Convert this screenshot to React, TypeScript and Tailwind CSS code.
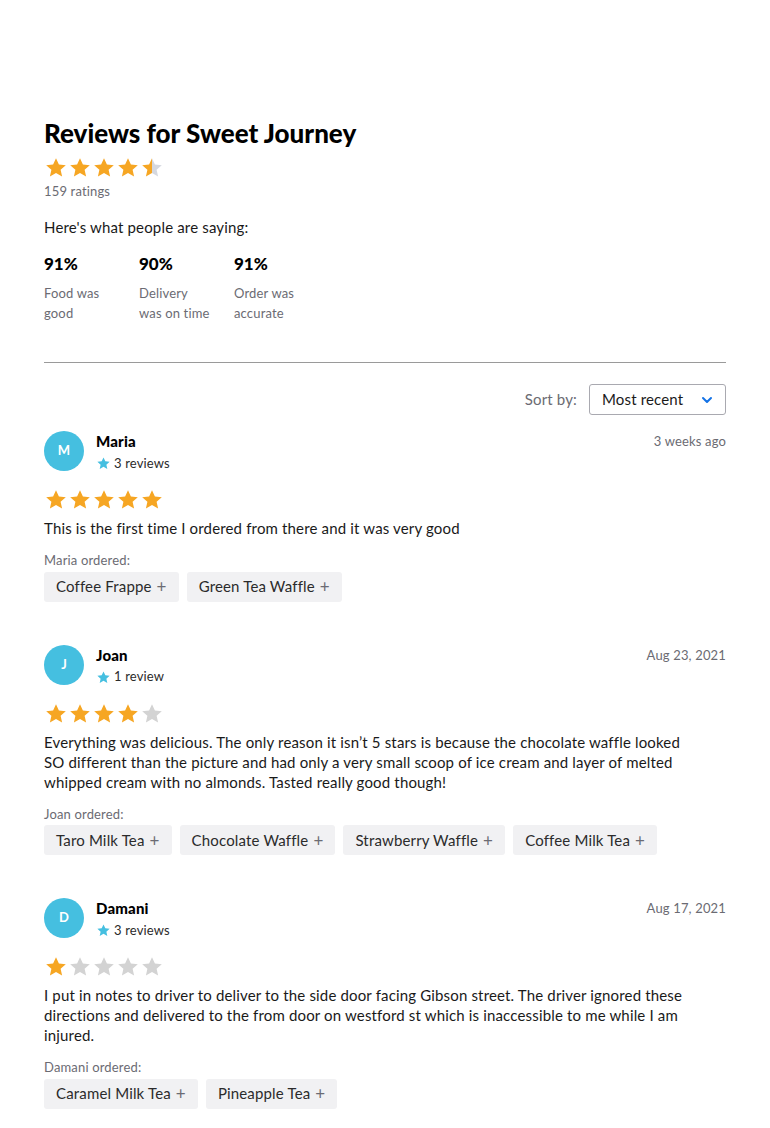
import React from 'react';

type Review = {
  name: string;
  initial: string;
  reviews: string;
  date: string;
  rating: number;
  text: string;
  items: string[];
};

const REVIEWS: Review[] = [
  {
    name: 'Maria',
    initial: 'M',
    reviews: '3 reviews',
    date: '3 weeks ago',
    rating: 5,
    text: 'This is the first time I ordered from there and it was very good',
    items: ['Coffee Frappe', 'Green Tea Waffle'],
  },
  {
    name: 'Joan',
    initial: 'J',
    reviews: '1 review',
    date: 'Aug 23, 2021',
    rating: 4,
    text: 'Everything was delicious. The only reason it isn’t 5 stars is because the chocolate waffle looked SO different than the picture and had only a very small scoop of ice cream and layer of melted whipped cream with no almonds. Tasted really good though!',
    items: ['Taro Milk Tea', 'Chocolate Waffle', 'Strawberry Waffle', 'Coffee Milk Tea'],
  },
  {
    name: 'Damani',
    initial: 'D',
    reviews: '3 reviews',
    date: 'Aug 17, 2021',
    rating: 1,
    text: 'I put in notes to driver to deliver to the side door facing Gibson street. The driver ignored these directions and delivered to the from door on westford st which is inaccessible to me while I am injured.',
    items: ['Caramel Milk Tea', 'Pineapple Tea'],
  },
];

const STAR = 'M12 2.2l2.9 6.3 6.9.7-5.2 4.6 1.5 6.8L12 17.1l-6.1 3.5 1.5-6.8L2.2 9.2l6.9-.7z';

const Star: React.FC<{ fill: 'on' | 'off' | 'half'; size?: number; color?: string }> = ({ fill, size = 24, color = '#f6a623' }) => (
  <svg width={size} height={size} viewBox="0 0 24 24">
    <defs>
      <linearGradient id="half">
        <stop offset="50%" stopColor={color} />
        <stop offset="50%" stopColor="#d5d8df" />
      </linearGradient>
    </defs>
    <path
      d={STAR}
      fill={fill === 'on' ? color : fill === 'off' ? '#d3d3d3' : 'url(#half)'}
      strokeLinejoin="round"
    />
  </svg>
);

const Stars: React.FC<{ rating: number }> = ({ rating }) => (
  <div className="flex">
    {[1, 2, 3, 4, 5].map((i) => (
      <Star key={i} fill={rating >= i ? 'on' : rating >= i - 0.5 ? 'half' : 'off'} />
    ))}
  </div>
);

const ReviewCard: React.FC<{ review: Review }> = ({ review }) => (
  <div className="pb-[43px]">
    <div className="flex items-start h-[45px]">
      <div className="w-10 h-10 rounded-full bg-[#45bfe0] text-white flex items-center justify-center text-[13px] font-bold">
        {review.initial}
      </div>
      <div className="ml-3 flex-1">
        <div className="font-['Lato'] font-black text-[15px] leading-5 text-black">{review.name}</div>
        <div className="flex items-center mt-[5px] h-[15px] text-[13px] text-[#2b2b2b]">
          <Star fill="on" size={15} color="#45bfe0" />
          <span className="ml-[3px]">{review.reviews}</span>
        </div>
      </div>
      <div className="text-[13px] text-[#6b6b73] pt-[1px]">{review.date}</div>
    </div>
    <div className="mt-[12px]">
      <Stars rating={review.rating} />
    </div>
    <p className="mt-[6px] text-[15px] leading-5 text-[#1a1a1a] pr-6">{review.text}</p>
    <div className="mt-[13px] text-[13px] text-[#6b6b73]">{review.name} ordered:</div>
    <div className="mt-[1px] flex flex-wrap gap-2">
      {review.items.map((item) => (
        <div key={item} className="h-[30px] px-3 bg-[#f1f1f3] rounded-[3px] flex items-center text-[15px] text-[#2b2b2b]">
          {item}
          <span className="ml-[5px] text-[#6b6b73] text-[17px] leading-none">+</span>
        </div>
      ))}
    </div>
  </div>
);

const App: React.FC = () => {
  return (
    <div className="min-h-screen bg-white font-['Lato',sans-serif] tracking-[0.01em]">
      <div className="px-[44px] pt-[117px]">
        <h1 className="font-['Lato'] font-black text-[26px] leading-8 text-black tracking-normal">Reviews for Sweet Journey</h1>
        <div className="mt-[7px]">
          <Stars rating={4.5} />
        </div>
        <div className="mt-[2px] text-[13px] text-[#6b6b73]">159 ratings</div>

        <p className="mt-[14px] text-[15px] text-[#1a1a1a]">Here's what people are saying:</p>

        <div className="mt-[16px] flex">
          {[
            ['91%', 'Food was', 'good'],
            ['90%', 'Delivery', 'was on time'],
            ['91%', 'Order was', 'accurate'],
          ].map(([pct, a, b]) => (
            <div key={a} className="w-[95px]">
              <div className="font-black text-[17px] leading-5 text-black tracking-normal">{pct}</div>
              <div className="mt-[9px] text-[13px] leading-5 text-[#6b6b73]">
                {a}
                <br />
                {b}
              </div>
            </div>
          ))}
        </div>

        <div className="mt-[39px] border-t border-[#9a9a9a]" />

        <div className="mt-[21px] flex justify-end items-center">
          <span className="text-[15px] text-[#6b6b73] mr-3">Sort by:</span>
          <div className="w-[137px] h-[31px] border border-[#a9a9b0] rounded-[3px] flex items-center justify-between px-3">
            <span className="text-[15px] text-[#1a1a1a]">Most recent</span>
            <svg width="12" height="12" viewBox="0 0 12 12">
              <path d="M2 4l4 4 4-4" fill="none" stroke="#1473e6" strokeWidth="2" strokeLinecap="round" strokeLinejoin="round" />
            </svg>
          </div>
        </div>

        <div className="mt-[16px]">
          {REVIEWS.map((r) => (
            <ReviewCard key={r.name} review={r} />
          ))}
        </div>
      </div>
    </div>
  );
};

export default App;
